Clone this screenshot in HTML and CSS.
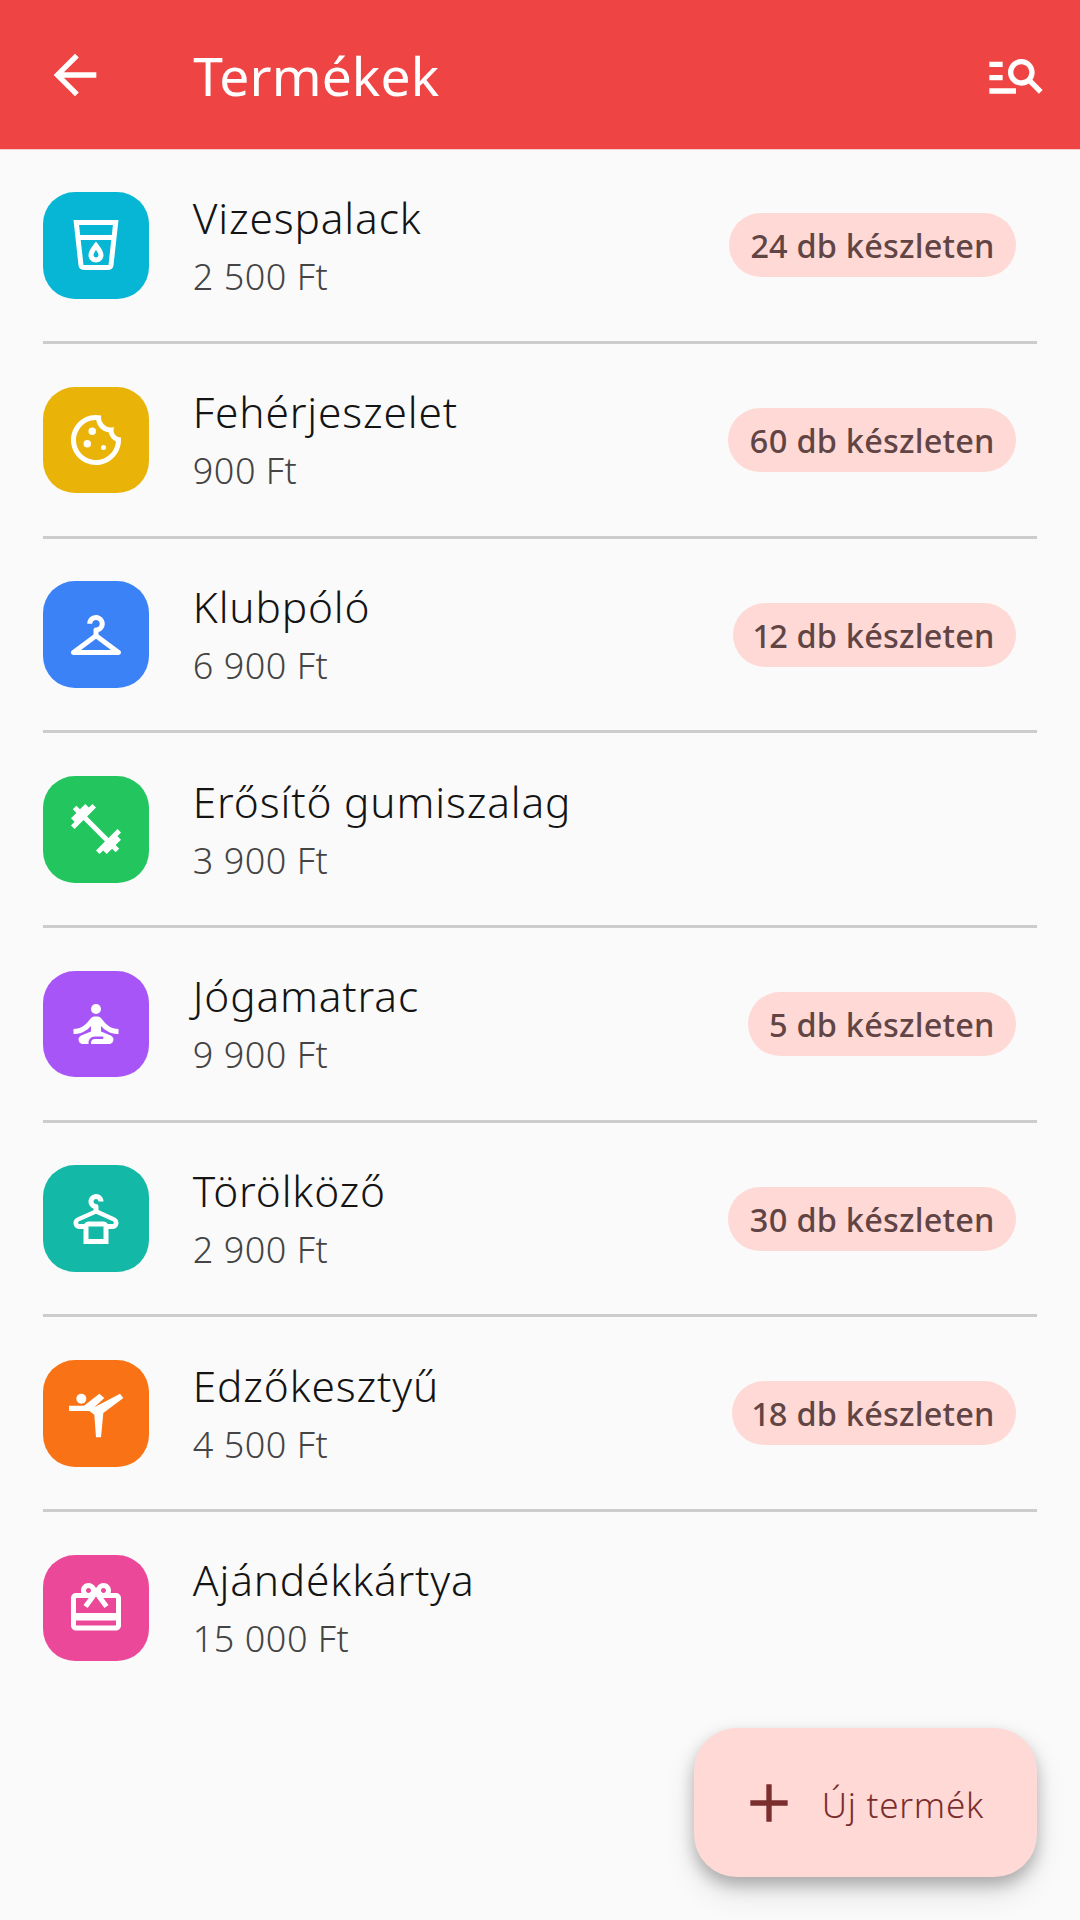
FILE: index.html
```html
<!DOCTYPE html>
<html lang="hu">
<head>
<meta charset="utf-8">
<title>Termékek</title>
<link rel="stylesheet" href="styles.css">
</head>
<body>
<div class="screen">
  <header class="appbar">
    <button class="iconbtn"><svg class="ic64" viewBox="0 0 24 24"><path d="M20 11H7.83l5.59-5.59L12 4l-8 8 8 8 1.41-1.41L7.83 13H20v-2z"/></svg></button>
    <h1 class="title">Termékek</h1>
    <button class="iconbtn"><svg class="ic64" viewBox="0 0 24 24"><path d="M7 9H2V7h5v2zm0 3H2v2h5v-2zm13.59 7-3.83-3.83c-.8.52-1.74.83-2.76.83-2.76 0-5-2.24-5-5s2.24-5 5-5 5 2.24 5 5c0 1.02-.31 1.96-.83 2.75L22 17.59 20.59 19zM17 11c0-1.65-1.35-3-3-3s-3 1.35-3 3 1.35 3 3 3 3-1.35 3-3zM2 19h10v-2H2v2z"/></svg></button>
  </header>
  <main class="list">
    <article class="row">
      <div class="tile cyan"><svg class="ic60" viewBox="0 0 24 24"><path d="M3 2l2.01 18.23C5.13 21.23 5.97 22 7 22h10c1.03 0 1.87-.77 1.99-1.77L21 2H3zm14 18l-10 .01L5.89 10H18.1L17 20zm1.33-12H5.67l-.44-4h13.53l-.43 4zM12 19c1.66 0 3-1.34 3-3 0-2-3-5.4-3-5.4S9 14 9 16c0 1.66 1.34 3 3 3zm0-5.09c.59.91 1 1.73 1 2.09 0 .55-.45 1-1 1s-1-.45-1-1c0-.36.41-1.18 1-2.09z"/></svg></div>
      <div class="info"><div class="name">Vizespalack</div><div class="price">2 500 Ft</div></div>
      <span class="chip">24 db készleten</span>
    </article>
    <article class="row">
      <div class="tile yellow"><svg class="ic60" viewBox="0 0 24 24"><path d="M21.95 10.99c-1.79-.03-3.7-1.95-2.68-4.22-2.98 1-5.77-1.59-5.19-4.56C6.95.71 2 6.58 2 12c0 5.52 4.48 10 10 10 5.89 0 10.54-5.08 9.95-11.01zM12 20c-4.41 0-8-3.59-8-8 0-3.31 2.73-8.18 8.08-8.02.42 2.54 2.44 4.56 4.99 4.94.07.36.52 2.55 2.92 3.63C19.7 16.86 16.06 20 12 20z"/><circle cx="10.5" cy="8.5" r="1.5"/><circle cx="8.5" cy="13.5" r="1.5"/><circle cx="15" cy="15" r="1"/></svg></div>
      <div class="info"><div class="name">Fehérjeszelet</div><div class="price">900 Ft</div></div>
      <span class="chip">60 db készleten</span>
    </article>
    <article class="row">
      <div class="tile blue"><svg class="ic60" viewBox="0 0 24 24"><path d="M21.6 18.2 13 11.75v-.91c1.65-.49 2.8-2.17 2.43-4.05-.26-1.31-1.3-2.4-2.61-2.7C10.54 3.57 8.5 5.3 8.5 7.5h2c0-.83.67-1.5 1.5-1.5s1.5.67 1.5 1.5c0 .84-.69 1.52-1.53 1.5-.54-.01-.97.45-.97.99v1.76L2.4 18.2c-.77.58-.36 1.8.6 1.8h18c.96 0 1.37-1.22.6-1.8zM6 18l6-4.5 6 4.5H6z"/></svg></div>
      <div class="info"><div class="name">Klubpóló</div><div class="price">6 900 Ft</div></div>
      <span class="chip">12 db készleten</span>
    </article>
    <article class="row">
      <div class="tile green"><svg class="ic60" viewBox="0 0 24 24"><path d="M20.57 14.86L22 13.43 20.57 12 17 15.57 8.43 7 12 3.43 10.57 2 9.14 3.43 7.71 2 5.57 4.14 4.14 2.71 2.71 4.14l1.43 1.43L2 7.71l1.43 1.43L2 10.57 3.43 12 7 8.43 15.57 17 12 20.57 13.43 22l1.43-1.43L16.29 22l2.14-2.14 1.43 1.43 1.43-1.43-1.43-1.43L22 16.29z"/></svg></div>
      <div class="info"><div class="name">Erősítő gumiszalag</div><div class="price">3 900 Ft</div></div>
    </article>
    <article class="row">
      <div class="tile purple"><svg class="ic60" viewBox="0 0 24 24"><circle cx="12" cy="6" r="2"/><path d="M21 16v-2c-2.24 0-4.16-.96-5.6-2.68l-1.34-1.6c-.38-.46-.94-.72-1.53-.72h-1.05c-.59 0-1.15.26-1.53.72l-1.34 1.6C7.16 13.04 5.24 14 3 14v2c2.77 0 5.19-1.17 7-3.25V15l-3.88 1.55c-.67.27-1.12.93-1.12 1.66C5 19.2 5.8 20 6.79 20H9v-.5c0-1.38 1.12-2.5 2.5-2.5h3c.28 0 .5.22.5.5s-.22.5-.5.5h-3c-.83 0-1.5.67-1.5 1.5v.5h7.21c.99 0 1.79-.8 1.79-1.79 0-.73-.45-1.39-1.12-1.66L14 15v-2.25c1.81 2.08 4.23 3.25 7 3.25z"/></svg></div>
      <div class="info"><div class="name">Jógamatrac</div><div class="price">9 900 Ft</div></div>
      <span class="chip">5 db készleten</span>
    </article>
    <article class="row">
      <div class="tile teal"><svg class="ic60" viewBox="0 0 24 24"><path d="M19.56 11.36 13 8.44V7c0-.55-.45-1-1-1s-1-.45-1-1 .45-1 1-1 1 .45 1 1h2c0-1.84-1.66-3.3-3.56-2.95-1.18.22-2.15 1.17-2.38 2.35-.3 1.56.6 2.94 1.94 3.42v.63l-6.56 2.92c-.88.38-1.44 1.25-1.44 2.2v.01C3 14.92 4.08 16 5.42 16H7v6h10v-6h1.58c1.34 0 2.42-1.08 2.42-2.42v-.01c0-.95-.56-1.82-1.44-2.21zM15 20H9v-5h6v5zm3.58-6h-1.86c-.35-.6-.98-1-1.72-1H9c-.74 0-1.38.4-1.72 1H5.42c-.78 0-.6-.94-.16-1.1L12 9.9l6.74 3c.44.2.62 1.1-.16 1.1z"/></svg></div>
      <div class="info"><div class="name">Törölköző</div><div class="price">2 900 Ft</div></div>
      <span class="chip">30 db készleten</span>
    </article>
    <article class="row">
      <div class="tile orange"><svg class="ic60" viewBox="0 0 24 24"><circle cx="6.13" cy="6.27" r="2"/><path d="M1.2 9.07h6l6.13-4.8 2 1.73-4 3.73 10.27-5.46 1.33 1.73-8 6-.93 9.73h-2l-.67-9.06-2-1.47H1.2z"/></svg></div>
      <div class="info"><div class="name">Edzőkesztyű</div><div class="price">4 500 Ft</div></div>
      <span class="chip">18 db készleten</span>
    </article>
    <article class="row">
      <div class="tile pink"><svg class="ic60" viewBox="0 0 24 24"><path d="M20 6h-2.18c.11-.31.18-.65.18-1 0-1.66-1.34-3-3-3-1.05 0-1.96.54-2.5 1.35l-.5.67-.5-.68C10.96 2.54 10.05 2 9 2 7.34 2 6 3.34 6 5c0 .35.07.69.18 1H4c-1.11 0-1.99.89-1.99 2L2 19c0 1.11.89 2 2 2h16c1.11 0 2-.89 2-2V8c0-1.11-.89-2-2-2zm-5-2c.55 0 1 .45 1 1s-.45 1-1 1-1-.45-1-1 .45-1 1-1zM9 4c.55 0 1 .45 1 1s-.45 1-1 1-1-.45-1-1 .45-1 1-1zm11 15H4v-2h16v2zm0-5H4V8h5.08L7 10.83 8.62 12 11 8.76l1-1.36 1 1.36L15.38 12 17 10.83 14.92 8H20v6z"/></svg></div>
      <div class="info"><div class="name">Ajándékkártya</div><div class="price">15 000 Ft</div></div>
    </article>
  </main>
  <button class="fab"><svg class="ic64 fabicon" viewBox="0 0 24 24"><path d="M19 13h-6v6h-2v-6H5v-2h6V5h2v6h6v2z"/></svg><span class="fablabel">Új termék</span></button>
</div>
</body>
</html>
```
FILE: styles.css
```css
* { box-sizing: border-box; }
html, body { margin: 0; padding: 0; }
body { font-family: "Noto Sans", "Open Sans", sans-serif; background: #fafafa; }
.screen { position: relative; width: 1080px; height: 1920px; overflow: hidden; background: #fafafa; }
.appbar { display: flex; align-items: center; height: 149.33px; background: #ef4444; color: #fff; padding-left: 10.67px; box-shadow: 0 1px 0 #f7caca; }
.iconbtn { display: flex; align-items: center; justify-content: center; width: 128px; height: 128px; padding: 0; border: 0; background: none; flex: none; }
.ic64 { width: 64px; height: 64px; fill: #fff; display: block; }
.ic60 { width: 60px; height: 60px; fill: #fff; display: block; }
.title { flex: 1; margin: 2px 0 0 54.5px; font-size: 53.33px; font-weight: 400; letter-spacing: .15px; line-height: 64px; color: #fff; }
.list { display: flex; flex-direction: column; padding: 0 42.67px; }
.row { display: flex; align-items: center; height: 194.67px; padding-top: .33px; border-bottom: 3px solid #cccccc; }
.row:last-child { border-bottom-color: transparent; }
.tile { display: flex; align-items: center; justify-content: center; width: 106.67px; height: 106.67px; border-radius: 32px; flex: none; }
.cyan { background: #06b6d4; } .yellow { background: #eab308; } .blue { background: #3b82f6; } .green { background: #22c55e; }
.purple { background: #a855f7; } .teal { background: #14b8a6; } .orange { background: #f97316; } .pink { background: #ec4899; }
.info { flex: 1; margin-left: 43.5px; min-width: 0; }
.name { font-size: 42.4px; font-weight: 350; line-height: 56px; letter-spacing: .85px; color: #141414; }
.price { font-size: 36px; font-weight: 350; line-height: 48px; letter-spacing: .5px; color: #444444; margin-top: 7px; }
.chip { display: flex; align-items: center; height: 64px; margin-right: 21.33px; padding: 1px 21.33px 0; border-radius: 32px; background: #ffd9d6; color: #614545; font-size: 32.5px; font-weight: 500; letter-spacing: .2px; white-space: nowrap; font-variant-numeric: proportional-nums; }
.fab { position: absolute; right: 42.67px; bottom: 42.67px; display: flex; align-items: center; height: 149.33px; padding: 0 53.33px 0 42.67px; border: 0; border-radius: 42.67px; background: #ffd9d6; box-shadow: 0 8px 16px rgba(0,0,0,.26), 0 16px 32px rgba(0,0,0,.1); font-family: inherit; }
.fabicon { fill: #7b2e2e; }
.fablabel { margin-left: 21.33px; padding-top: 3px; font-size: 35px; font-weight: 350; letter-spacing: .75px; color: #7b2e2e; }
```
